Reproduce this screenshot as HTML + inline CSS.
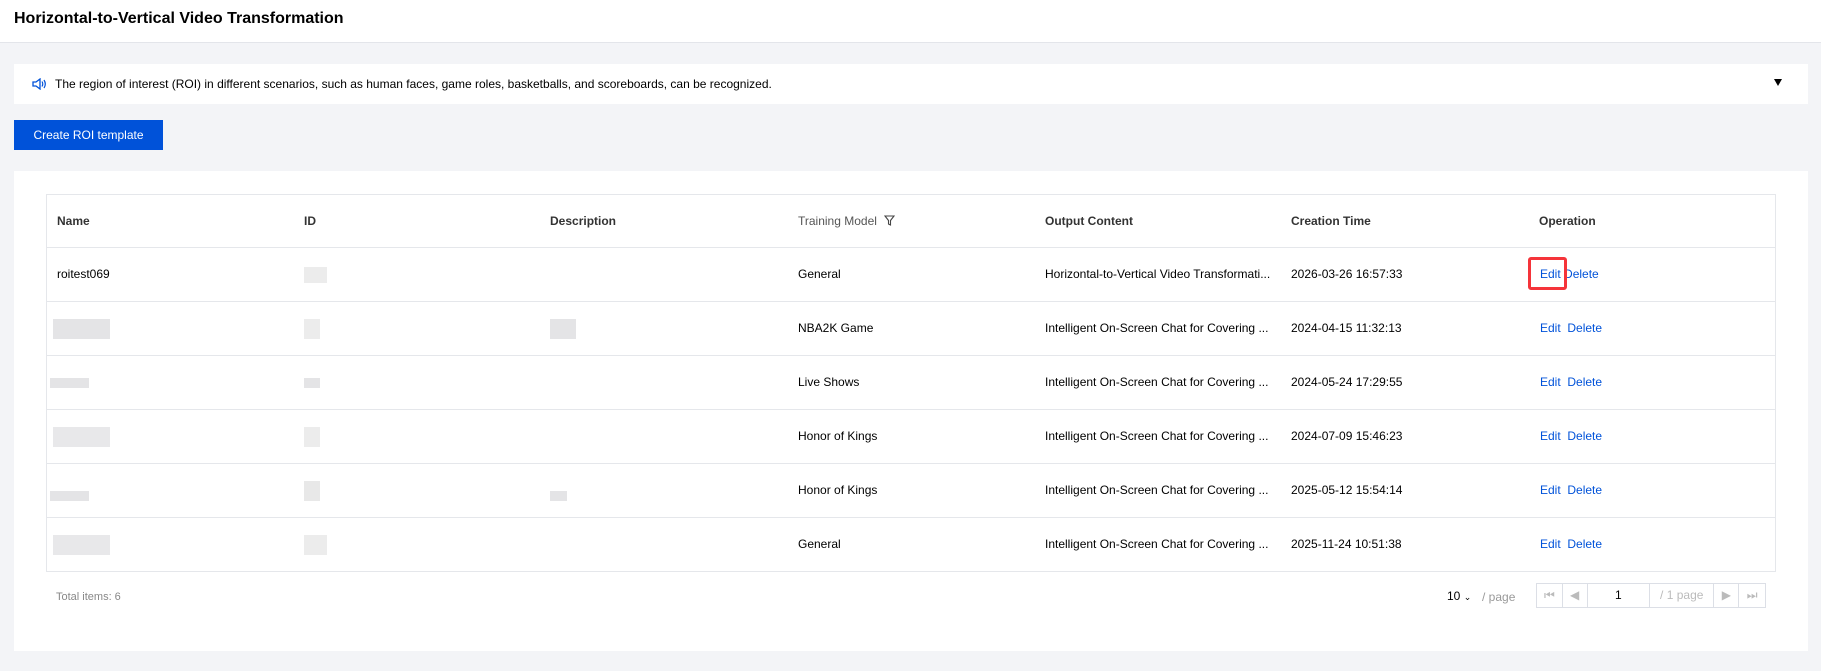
<!DOCTYPE html>
<html><head><meta charset="utf-8"><style>
*{box-sizing:border-box;margin:0;padding:0}
body{width:1821px;height:671px;background:#f3f4f7;font-family:"Liberation Sans",Arial,sans-serif;position:relative;overflow:hidden;color:#333}
.hdr{position:absolute;left:0;top:0;width:1821px;height:43px;background:#fff;border-bottom:1px solid #e3e5ea}
.hdr h1{position:absolute;left:14px;top:10px;font-size:16px;font-weight:bold;color:#000}
.notice{position:absolute;left:14px;top:64px;width:1794px;height:40px;background:#fff}
.notice span{position:absolute;left:41px;top:13px;font-size:12px;color:#000}
.notice svg{position:absolute;left:18px;top:14px}
.caret{position:absolute;right:26px;top:15px;width:0;height:0;border-left:4px solid transparent;border-right:4px solid transparent;border-top:7px solid #000}
.btn{position:absolute;left:14px;top:120px;width:149px;height:30px;background:#0052d9;color:#fff;font-size:12px;text-align:center;line-height:30px}
.card{position:absolute;left:14px;top:171px;width:1794px;height:480px;background:#fff}
.tbl{position:absolute;left:46px;top:194px;width:1730px;height:378px;border:1px solid #e5e7eb}
.row{position:absolute;left:0;width:1728px;height:54px;border-bottom:1px solid #e5e7eb}
.c{position:absolute;top:0;line-height:53px;font-size:12px;white-space:nowrap;color:#000}
.h .c{font-weight:bold;color:#333}
.blur{position:absolute;background:#e4e4e6}
a{color:#0052d9;text-decoration:none}
.pg{position:absolute;font-size:12px}
.pbox{position:absolute;left:1536px;top:583px;width:230px;height:25px;border:1px solid #dcdfe6;display:flex}
.pbox div{border-right:1px solid #dcdfe6;height:23px;line-height:23px;text-align:center;font-size:12px;color:#bbb}
</style></head><body>
<div class="hdr"><h1>Horizontal-to-Vertical Video Transformation</h1></div>
<div class="notice">
<svg width="15" height="12" viewBox="0 0 15 12"><path d="M1 4h3l4-3v10l-4-3H1z" fill="none" stroke="#0052d9" stroke-width="1.3"/><path d="M10 3.5q1.5 2.5 0 5M12 2q2.6 4 0 8" fill="none" stroke="#0052d9" stroke-width="1.2"/></svg>
<span>The region of interest (ROI) in different scenarios, such as human faces, game roles, basketballs, and scoreboards, can be recognized.</span>
<div class="caret"></div></div>
<div class="btn">Create ROI template</div>
<div class="card"></div>
<div class="tbl">
<div class="row h" style="top:0;height:53px">
<div class="c" style="left:10px">Name</div><div class="c" style="left:257px">ID</div><div class="c" style="left:503px">Description</div>
<div class="c" style="left:751px;font-weight:normal;color:#555">Training Model <svg width="11" height="11" viewBox="0 0 11 11" style="vertical-align:-1px;margin-left:4px"><path d="M1 1h9L6.5 5.5V10L4.5 9V5.5z" fill="none" stroke="#444" stroke-width="1.1"/></svg></div>
<div class="c" style="left:998px">Output Content</div><div class="c" style="left:1244px">Creation Time</div><div class="c" style="left:1492px">Operation</div></div>

<div class="row" style="top:53px"><div class="c" style="left:10px">roitest069</div><div class="blur" style="left:257px;top:19px;width:23px;height:16px;background:#ececec"></div><div class="c" style="left:751px">General</div><div class="c" style="left:998px">Horizontal-to-Vertical Video Transformati...</div><div class="c" style="left:1244px">2026-03-26 16:57:33</div><div class="c" style="left:1493px"><a>Edit</a> <a>Delete</a></div></div>
<div class="row" style="top:107px"><div class="blur" style="left:6px;top:17px;width:57px;height:20px"></div><div class="blur" style="left:257px;top:17px;width:16px;height:20px;background:#ececec"></div><div class="blur" style="left:503px;top:17px;width:26px;height:20px"></div><div class="c" style="left:751px">NBA2K Game</div><div class="c" style="left:998px">Intelligent On-Screen Chat for Covering ...</div><div class="c" style="left:1244px">2024-04-15 11:32:13</div><div class="c" style="left:1493px"><a>Edit</a>&nbsp; <a>Delete</a></div></div>
<div class="row" style="top:161px"><div class="blur" style="left:3px;top:22px;width:39px;height:10px"></div><div class="blur" style="left:257px;top:22px;width:16px;height:10px"></div><div class="c" style="left:751px">Live Shows</div><div class="c" style="left:998px">Intelligent On-Screen Chat for Covering ...</div><div class="c" style="left:1244px">2024-05-24 17:29:55</div><div class="c" style="left:1493px"><a>Edit</a>&nbsp; <a>Delete</a></div></div>
<div class="row" style="top:215px"><div class="blur" style="left:6px;top:17px;width:57px;height:20px;background:#e8e8ea"></div><div class="blur" style="left:257px;top:17px;width:16px;height:20px;background:#ececec"></div><div class="c" style="left:751px">Honor of Kings</div><div class="c" style="left:998px">Intelligent On-Screen Chat for Covering ...</div><div class="c" style="left:1244px">2024-07-09 15:46:23</div><div class="c" style="left:1493px"><a>Edit</a>&nbsp; <a>Delete</a></div></div>
<div class="row" style="top:269px"><div class="blur" style="left:3px;top:27px;width:39px;height:10px"></div><div class="blur" style="left:257px;top:17px;width:16px;height:20px;background:#e8e8e8"></div><div class="blur" style="left:503px;top:27px;width:17px;height:10px"></div><div class="c" style="left:751px">Honor of Kings</div><div class="c" style="left:998px">Intelligent On-Screen Chat for Covering ...</div><div class="c" style="left:1244px">2025-05-12 15:54:14</div><div class="c" style="left:1493px"><a>Edit</a>&nbsp; <a>Delete</a></div></div>
<div class="row" style="top:323px;border-bottom:none"><div class="blur" style="left:6px;top:17px;width:57px;height:20px;background:#e8e8ea"></div><div class="blur" style="left:257px;top:17px;width:23px;height:20px;background:#ececec"></div><div class="c" style="left:751px">General</div><div class="c" style="left:998px">Intelligent On-Screen Chat for Covering ...</div><div class="c" style="left:1244px">2025-11-24 10:51:38</div><div class="c" style="left:1493px"><a>Edit</a>&nbsp; <a>Delete</a></div></div>
</div>
<div style="position:absolute;left:1528px;top:257px;width:39px;height:33px;border:3px solid #f5343a;border-radius:3px"></div>
<div class="pg" style="left:56px;top:591px;color:#888;font-size:11px">Total items: 6</div>
<div class="pg" style="left:1447px;top:589px;color:#000">10 <span style="font-size:9px">&#8964;</span></div>
<div class="pg" style="left:1482px;top:590px;color:#999">/ page</div>
<div class="pbox"><div style="width:26px">&#9198;</div><div style="width:25px">&#9664;</div><div style="width:63px;color:#000">1</div><div style="width:65px">/ 1 page</div><div style="width:25px">&#9654;</div><div style="width:26px;border:none">&#9197;</div></div>
</body></html>
